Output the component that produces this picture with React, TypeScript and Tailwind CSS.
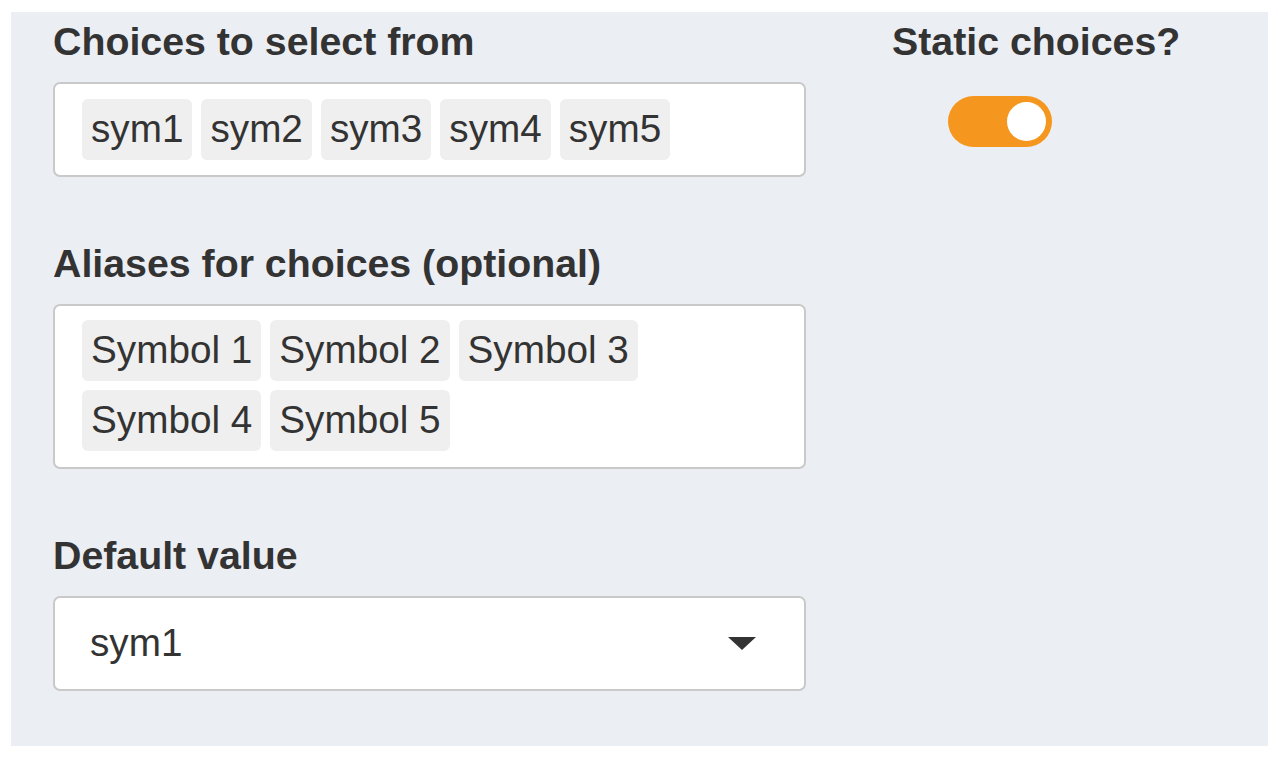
const choices = ['sym1', 'sym2', 'sym3', 'sym4', 'sym5']
const aliases = ['Symbol 1', 'Symbol 2', 'Symbol 3', 'Symbol 4', 'Symbol 5']

function Chip({ text }: { text: string }) {
  return (
    <span className="flex h-[61px] items-center rounded-[6px] bg-[#efefef] px-[9px] leading-none text-[#333]">
      {text}
    </span>
  )
}

function Label({ text }: { text: string }) {
  return <div className="mb-[13px] h-[55px] text-[39.3px] font-bold leading-[55px] text-[#333]">{text}</div>
}

export default function App() {
  return (
    <div className="min-h-screen bg-white pl-[11px] pr-[10px] pt-[12px] font-['Liberation_Sans',Arial,sans-serif]">
      <div className="flex h-[734px] bg-[#ebeef3] pl-[42px] pt-[2px]">
        <div className="w-[753px]">
          <Label text="Choices to select from" />
          <div className="flex h-[95px] flex-wrap items-start gap-[9px] rounded-[7px] border-2 border-[#c9c9c9] bg-white pl-[27px] pt-[15px] text-[38.7px]">
            {choices.map((c) => (
              <Chip key={c} text={c} />
            ))}
          </div>

          <div className="mt-[59px]">
            <Label text="Aliases for choices (optional)" />
            <div className="flex h-[165px] flex-wrap content-start items-start gap-[9px] rounded-[7px] border-2 border-[#c9c9c9] bg-white pl-[27px] pr-[150px] pt-[14px] text-[38.7px]">
              {aliases.map((a) => (
                <Chip key={a} text={a} />
              ))}
            </div>
          </div>

          <div className="mt-[59px]">
            <Label text="Default value" />
            <div className="flex h-[95px] items-center justify-between rounded-[7px] border-2 border-[#c9c9c9] bg-white pl-[35px] pr-[48px] text-[38.7px] text-[#333]">
              <span className="leading-none">sym1</span>
              <svg width="28" height="13" viewBox="0 0 28 13">
                <path d="M0 0 H28 L14 13 Z" fill="#333" />
              </svg>
            </div>
          </div>
        </div>

        <div className="ml-[86px]">
          <div className="h-[55px] text-[39.3px] font-bold leading-[55px] text-[#333]">Static choices?</div>
          <div className="ml-[56px] mt-[27px] flex h-[51px] w-[104px] items-center justify-end rounded-full bg-[#f5971f] pr-[6px]">
            <span className="h-[39px] w-[39px] rounded-full bg-white" />
          </div>
        </div>
      </div>
    </div>
  )
}
